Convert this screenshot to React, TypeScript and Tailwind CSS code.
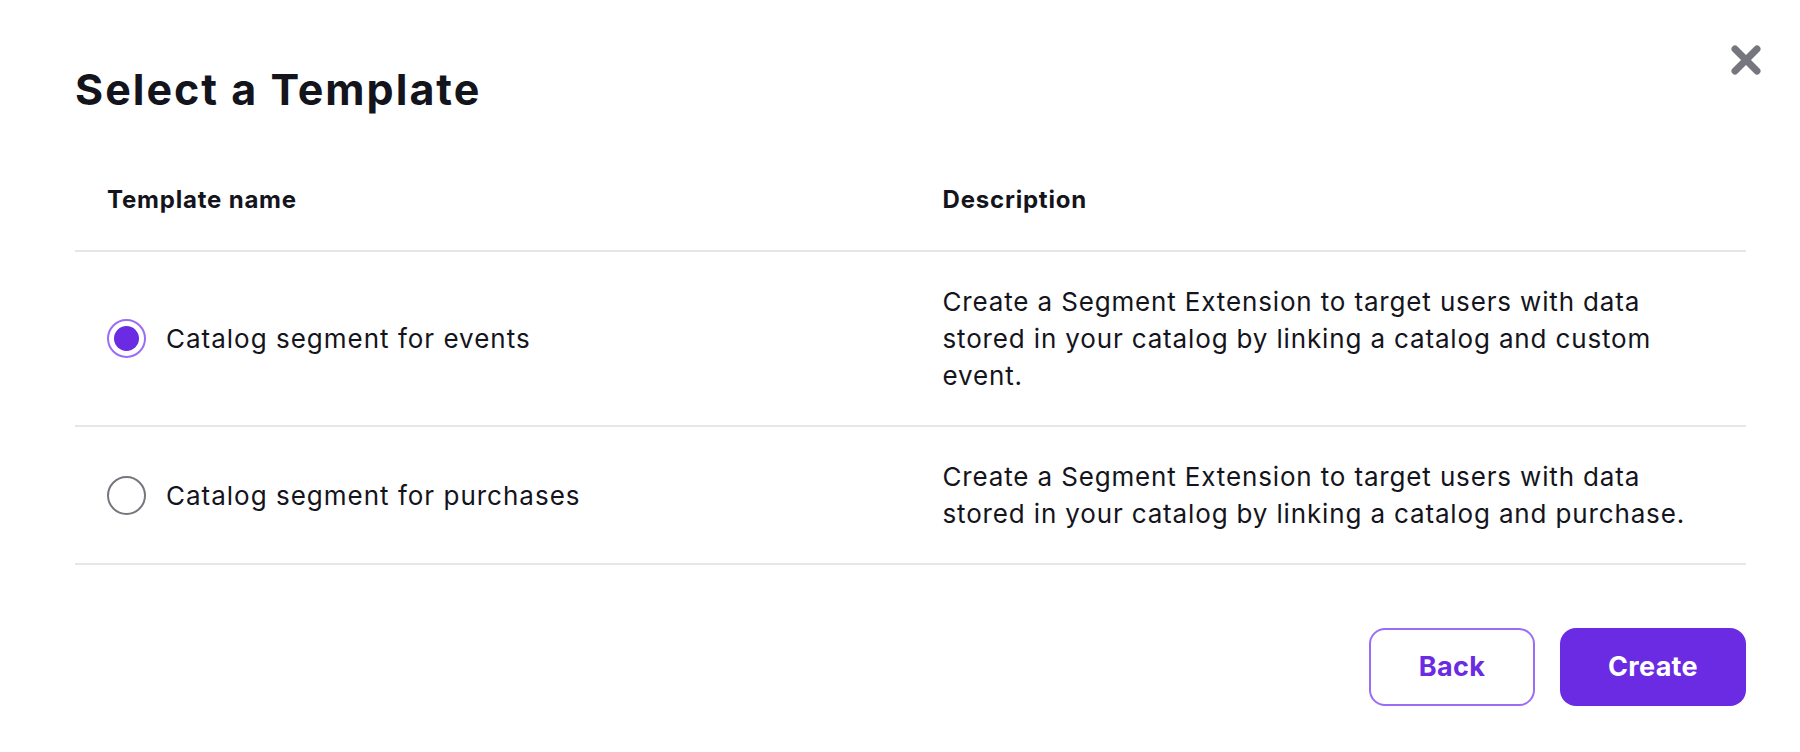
import React, { useState } from 'react';

type Template = {
  id: string;
  name: string;
  description: string;
};

const TEMPLATES: Template[] = [
  {
    id: 'events',
    name: 'Catalog segment for events',
    description:
      'Create a Segment Extension to target users with data stored in your catalog by linking a catalog and custom event.',
  },
  {
    id: 'purchases',
    name: 'Catalog segment for purchases',
    description:
      'Create a Segment Extension to target users with data stored in your catalog by linking a catalog and purchase.',
  },
];

const CloseIcon: React.FC = () => (
  <svg width="32" height="32" viewBox="0 0 32 32" fill="none">
    <path d="M5 5 L27 27 M27 5 L5 27" stroke="#76767e" strokeWidth="7" strokeLinecap="round" />
  </svg>
);

const Radio: React.FC<{ checked: boolean; onChange: () => void }> = ({ checked, onChange }) => (
  <button
    type="button"
    onClick={onChange}
    className={
      checked
        ? 'flex h-[39px] w-[39px] shrink-0 items-center justify-center rounded-full border-2 border-[#9b6cf6] bg-white'
        : 'flex h-[39px] w-[39px] shrink-0 items-center justify-center rounded-full border-2 border-[#76767e] bg-white'
    }
  >
    {checked && <span className="block h-[25px] w-[25px] rounded-full bg-[#6a2be2]" />}
  </button>
);

const App: React.FC = () => {
  const [selected, setSelected] = useState('events');

  return (
    <div className="min-h-screen bg-white font-['Inter',sans-serif] text-[#14141c]">
      <div className="pl-[75px] pr-[54px] pt-[67px]">
        <div className="flex items-start justify-between">
          <h1 className="text-[43px] font-bold leading-[44px] tracking-[2px]">Select a Template</h1>
          <button type="button" className="-mr-[16px] -mt-[23px]">
            <CloseIcon />
          </button>
        </div>

        <table className="mt-[38px] w-full table-fixed border-collapse">
          <thead>
            <tr className="border-b-2 border-[#e6e6e6]">
              <th className="px-[32px] py-[32px] text-left text-[24px] font-bold leading-[37px] tracking-[0.8px]">
                Template name
              </th>
              <th className="px-[32px] py-[32px] text-left text-[24px] font-bold leading-[37px] tracking-[0.8px]">
                Description
              </th>
            </tr>
          </thead>
          <tbody>
            {TEMPLATES.map(t => (
              <tr key={t.id} className="border-b-2 border-[#e6e6e6]">
                <td className="px-[32px] py-[31px] align-middle">
                  <label className="flex cursor-pointer items-center gap-[20px] text-[26px] leading-[37px] tracking-[1px]">
                    <Radio checked={selected === t.id} onChange={() => setSelected(t.id)} />
                    {t.name}
                  </label>
                </td>
                <td className="px-[32px] py-[31px] align-middle text-[26px] leading-[37px] tracking-[0.85px]">
                  {t.description}
                </td>
              </tr>
            ))}
          </tbody>
        </table>

        <div className="mt-[63px] flex justify-end gap-[25px]">
          <button
            type="button"
            className="h-[78px] w-[166px] rounded-[16px] border-2 border-[#9b6cf6] bg-white text-[27px] font-bold tracking-[0.3px] text-[#6a2be2]"
          >
            Back
          </button>
          <button
            type="button"
            className="h-[78px] w-[186px] rounded-[16px] bg-[#6a2be2] text-[27px] font-bold tracking-[0.3px] text-white"
          >
            Create
          </button>
        </div>
      </div>
    </div>
  );
};

export default App;
